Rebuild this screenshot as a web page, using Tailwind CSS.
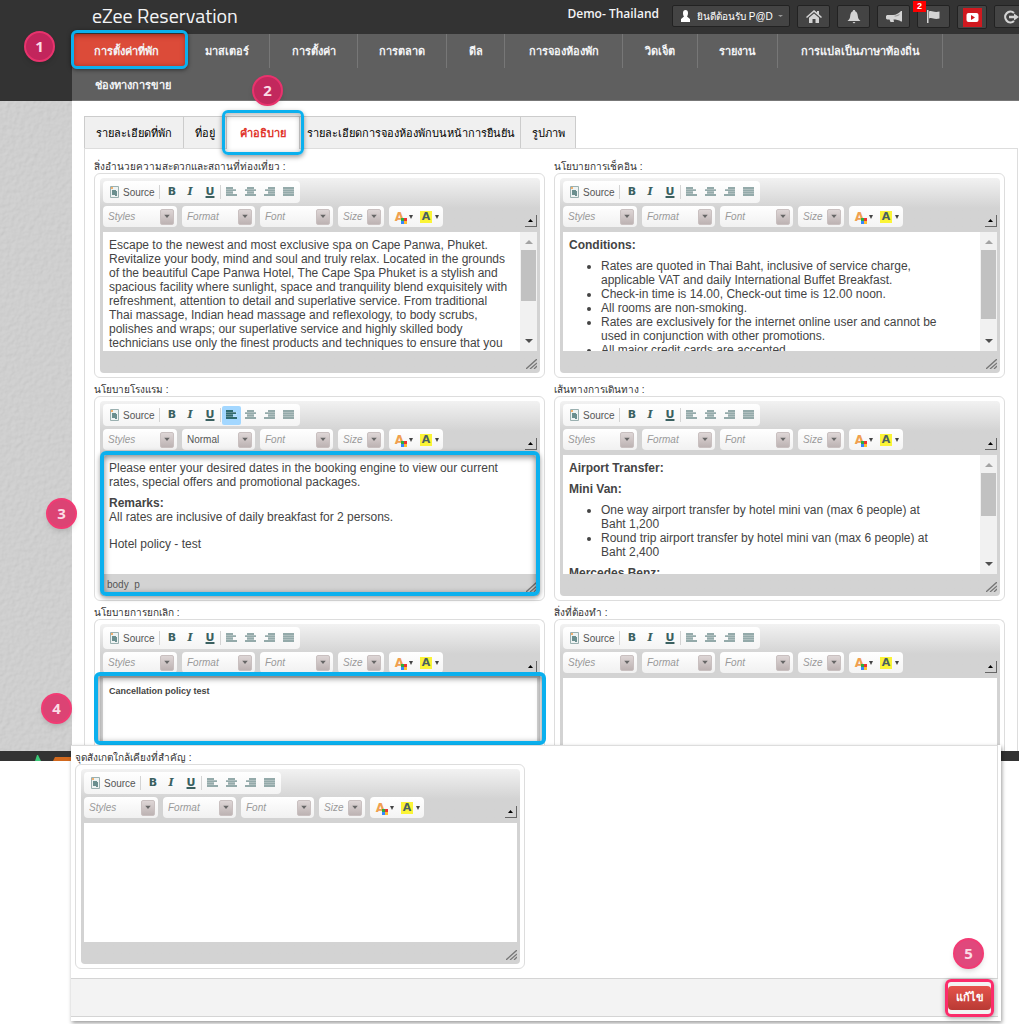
<!DOCTYPE html>
<html lang="th">
<head>
    <meta charset="UTF-8">
    <meta name="viewport" content="width=device-width, initial-scale=1.0">
    <title>eZee Reservation</title>
    <script src="https://cdn.jsdelivr.net/npm/@tailwindcss/browser@4"></script>
    <style>
        body { font-family: 'Liberation Sans', 'Noto Sans', sans-serif; }
    </style>
</head>
<body class="bg-white text-[#333]">
    <div class="relative overflow-hidden pb-1">
        <!-- Header -->
        <header class="flex h-[34px] justify-between overflow-hidden bg-[#333] pl-[92px]">
            <h1 class="font-['Titillium_Web','Roboto'] text-[20px] leading-[32px] text-gray-100">eZee Reservation</h1>
            <div class="-mr-[9px] flex shrink-0 items-start gap-[7px] pt-[5px]">
                <span class="mr-[6px] font-['Open_Sans'] text-[12px] leading-[18px] font-semibold text-gray-100">Demo- Thailand</span>
                <button class="flex h-[22px] w-[118px] items-center rounded-xs border border-[#222] bg-[#444] pl-2 text-[10px] text-white">
                    <svg class="mr-[7px] h-3 w-[9px] shrink-0" viewBox="0 0 9 12" fill="#fff"><path d="M2 3a2.500 3 0 0 1 5 0c0 2-.6 2.800-1 3.500L9 9v3H0V9l3-2.500C2.500 6 2 5 2 3z"/></svg>
                    <span class="whitespace-nowrap">ยินดีต้อนรับ P@D</span>
                    <svg class="ml-auto mr-[6px] h-1 w-[5px] shrink-0" viewBox="0 0 5 4" fill="#999"><path d="M0 1h5L2.500 3z"/></svg>
                </button>
                <button aria-label="Home" class="flex h-[23px] w-[33px] items-center justify-center rounded-xs border border-[#222] bg-[#444]">
                    <svg class="h-[13px] w-4" viewBox="0 0 16 13" fill="#d4d4d4"><path d="M8 0l3 2.600V1h2v3.300L16 7l-1 1-7-6-7 6-1-1z"/><path d="M8 3.500l5 4.300V13H9.500V9h-3v4H3V7.800z"/></svg>
                </button>
                <button aria-label="Notifications" class="flex h-[23px] w-[33px] items-center justify-center rounded-xs border border-[#222] bg-[#444]">
                    <svg class="h-[14px] w-[14px]" viewBox="0 0 14 14" fill="#d4d4d4"><path d="M7 0c.8 0 1.200.6 1.200 1.200C10.200 2 10.500 4 10.800 6c.2 2.500 1.200 3.500 2.700 5H.5c1.500-1.500 2.500-2.500 2.700-5 .3-2 .6-4 2.600-4.800C5.800.6 6.200 0 7 0zM5.500 12h3L7 13.500z"/></svg>
                </button>
                <button aria-label="Announcements" class="flex h-[23px] w-[33px] items-center justify-center rounded-xs border border-[#222] bg-[#444]">
                    <svg class="h-3 w-4" viewBox="0 0 16 12" fill="#d4d4d4"><path d="M15 0h1v10.500h-1C13 9 10 8.500 7.500 8.500L8 11H4.500L3.500 8.500H1L0 7.500V5l1-1h6c3 0 6-2 8-4z"/><path fill="#999" d="M13.500 3v1C12 5 10 5.500 8.500 5.600V4.800c1.500-.3 3.500-1 5-1.800z"/></svg>
                </button>
                <button aria-label="Flags" class="relative flex h-[23px] w-[33px] items-center justify-center rounded-xs border border-[#222] bg-[#444]">
                    <svg class="h-[13px] w-[13px]" viewBox="0 0 13 13" fill="#d4d4d4"><path d="M0 0h1.500v13H0zM2 1.500c3-1.500 4.500 1.500 10.500 0v7c-6 1.500-7-1.500-10.500 0z"/></svg>
                    <span class="absolute -left-[5px] -top-[5px] h-[11px] w-[13px] bg-[#f00] text-[9px] leading-[11px] font-bold text-white">2</span>
                </button>
                <button aria-label="Videos" class="flex h-[24px] w-[30px] items-center justify-center rounded-xs border border-[#222] bg-[#444]">
                    <svg class="h-[19px] w-[19px]" viewBox="0 0 19 19"><path fill="#d0191f" d="M0 0h19v19H0z"/><rect x="3.500" y="5" width="12" height="9" rx="2" fill="#fff"/><path fill="#d0191f" d="M8 7l4 2.500L8 12z"/></svg>
                </button>
                <button aria-label="Sign out" class="flex h-[23px] w-[34px] items-center justify-center rounded-xs border border-[#222] bg-[#444]">
                    <svg class="h-[14px] w-4" viewBox="0 0 16 14"><path fill="none" stroke="#d4d4d4" stroke-width="2.200" d="M11 3a5.300 5.300 0 1 0 0 8"/><path fill="#d4d4d4" d="M6 5.800h5V3.500L16 7l-5 3.500V8.200H6z"/></svg>
                </button>
            </div>
        </header>

        <div class="flex">
            <!-- Wall texture beside the page -->
            <aside class="flex w-[72px] shrink-0 flex-col">
                <div class="h-[67px] bg-[#333]"></div>
                <div class="relative flex-1 overflow-hidden bg-[#c9c9c9]">
                    <svg class="absolute inset-0 h-full w-full" aria-hidden="true">
                        <filter id="wall" x="0" y="0" width="100%" height="100%">
                            <feTurbulence type="fractalNoise" baseFrequency="0.22" numOctaves="2" result="n"/>
                            <feDiffuseLighting in="n" lighting-color="#d6d6d6" surfaceScale="0.4"><feDistantLight azimuth="225" elevation="68"/></feDiffuseLighting>
                        </filter>
                        <rect width="100%" height="100%" filter="url(#wall)"/>
                    </svg>
                </div>
            </aside>

            <main class="min-w-0 flex-1">
                <nav class="flex h-[67px] flex-wrap border-b border-[#777] bg-[#5f5f5f] text-center text-[11px] leading-[34px] font-bold text-gray-100">
                    <a href="#" class="relative h-[34px] w-[115px] bg-[#dc4b39] pr-[6px] shadow-[inset_0_0_6px_#7a1f14]">
                        การตั้งค่าที่พัก
                        <span class="absolute -inset-x-px -top-1 -bottom-[1px] rounded-md border-3 border-[#0bb0ee] shadow-[0_1px_4px_rgba(0,0,0,0.5)]"></span>
                    </a>
                    <a href="#" class="h-[34px] w-[83px] border-r border-[#777] pr-[2px]">มาสเตอร์</a>
                    <a href="#" class="h-[34px] w-[88px] border-r border-[#777]">การตั้งค่า</a>
                    <a href="#" class="h-[34px] w-[89px] border-r border-[#777]">การตลาด</a>
                    <a href="#" class="h-[34px] w-[58px] border-r border-[#777]">ดีล</a>
                    <a href="#" class="h-[34px] w-[118px] border-r border-[#777]">การจองห้องพัก</a>
                    <a href="#" class="h-[34px] w-[75px] border-r border-[#777]">วิดเจ็ต</a>
                    <a href="#" class="h-[34px] w-[80px] border-r border-[#777]">รายงาน</a>
                    <a href="#" class="h-[34px] w-[165px] border-r border-[#777]">การแปลเป็นภาษาท้องถิ่น</a>
                    <a href="#" class="h-[32px] w-[121px]">ช่องทางการขาย</a>
                </nav>

                <div class="pt-[15px] pr-px pl-3">
                    <!-- Tabs -->
                    <div class="flex h-[33px] border-b border-[#ddd] text-center text-[11px] leading-[32px] text-black">
                        <a href="#" class="w-[99px] border-t border-l border-[#ccc] bg-[#f0f0f0]">รายละเอียดที่พัก</a>
                        <a href="#" class="w-[43px] border-t border-l border-[#ccc] bg-[#f0f0f0]">ที่อยู่</a>
                        <a href="#" class="relative z-10 h-[33px] w-[74px] border-x border-t border-[#ccc] bg-white font-bold text-[#e0352b]">
                            คำอธิบาย
                            <span class="absolute -inset-x-[5px] -top-[7px] -bottom-[6px] rounded-md border-3 border-[#0bb0ee] shadow-[0_2px_5px_rgba(0,0,0,0.4),inset_0_2px_6px_rgba(0,0,0,0.3)]"></span>
                        </a>
                        <a href="#" class="w-[220px] border-t border-[#ccc] bg-[#f0f0f0] pl-[2px] whitespace-nowrap">รายละเอียดการจองห้องพักบนหน้าการยืนยัน</a>
                        <a href="#" class="w-[56px] border-x border-t border-[#ccc] bg-[#f0f0f0]">รูปภาพ</a>
                    </div>

                    <div class="grid grid-cols-2 gap-x-[9px] border-x border-[#ddd] pt-[6px] pr-3 pl-[9px]">
                        <section data-editor="facilities" data-label="สิ่งอำนวยความสะดวกและสถานที่ท่องเที่ยว :" data-thumb="h-[51px]">
                            <p class="pr-1">Escape to the newest and most exclusive spa on Cape Panwa, Phuket. Revitalize your body, mind and soul and truly relax. Located in the grounds of the beautiful Cape Panwa Hotel, The Cape Spa Phuket is a stylish and spacious facility where sunlight, space and tranquility blend exquisitely with refreshment, attention to detail and superlative service. From traditional Thai massage, Indian head massage and reflexology, to body scrubs, polishes and wraps; our superlative service and highly skilled body technicians use only the finest products and techniques to ensure that you are pampered to perfection. Wander around in Wildnisss body treatments and</p>
                        </section>
                        <section data-editor="checkin" data-label="นโยบายการเช็คอิน :" data-thumb="h-[69px]">
                            <p class="font-bold">Conditions:</p>
                            <ul class="mt-[7px] list-disc pr-8 pl-8">
                                <li>Rates are quoted in Thai Baht, inclusive of service charge, applicable VAT and daily International Buffet Breakfast.</li>
                                <li>Check-in time is 14.00, Check-out time is 12.00 noon.</li>
                                <li>All rooms are non-smoking.</li>
                                <li>Rates are exclusively for the internet online user and cannot be used in conjunction with other promotions.</li>
                                <li>All major credit cards are accepted.</li>
                            </ul>
                        </section>
                        <section data-editor="hotel" data-label="นโยบายโรงแรม :" data-active data-path="body&nbsp;&nbsp;p">
                            <p class="pr-2">Please enter your desired dates in the booking engine to view our current rates, special offers and promotional packages.</p>
                            <p class="mt-[7px]"><b>Remarks:</b><br>All rates are inclusive of daily breakfast for 2 persons.</p>
                            <p class="mt-[13px]">Hotel policy - test</p>
                            <span class="absolute -inset-x-[3px] -top-1 bottom-0 rounded-md border-4 border-[#0bb0ee] shadow-[0_2px_5px_rgba(0,0,0,0.4),inset_0_2px_6px_rgba(0,0,0,0.5)]"></span>
                        </section>
                        <section data-editor="directions" data-label="เส้นทางการเดินทาง :" data-thumb="h-[43px]">
                            <p class="font-bold">Airport Transfer:</p>
                            <p class="mt-[7px] font-bold">Mini Van:</p>
                            <ul class="mt-[7px] list-disc pr-8 pl-8">
                                <li>One way airport transfer by hotel mini van (max 6 people) at Baht 1,200</li>
                                <li>Round trip airport transfer by hotel mini van (max 6 people) at Baht 2,400</li>
                            </ul>
                            <p class="mt-[7px] font-bold">Mercedes Benz:</p>
                        </section>
                        <section data-editor="cancellation" data-label="นโยบายการยกเลิก :" data-cut>
                            <p class="text-[9px] font-bold">Cancellation policy test</p>
                            <span class="absolute -inset-x-[9px] -top-[6px] bottom-[6px] rounded-md border-4 border-[#0bb0ee] shadow-[inset_0_2px_6px_rgba(0,0,0,0.5)]"></span>
                        </section>
                        <section data-editor="todo" data-label="สิ่งที่ต้องทำ :" data-cut></section>
                    </div>
                </div>
            </main>
        </div>

        <div class="flex h-[10px] items-end bg-[#333] pl-[35px]">
            <svg class="h-[6px] w-9" viewBox="0 0 36 6"><path fill="#3cc878" d="M2 0h1l3 6H0z"/><path fill="#d2691e" d="M20 2h16v4H18z"/></svg>
        </div>

        <!-- Lower part of the form -->
        <div class="relative -mt-4 mr-[18px] ml-[71px] bg-white pr-[3px] pb-1 shadow-[1px_2px_4px_rgba(0,0,0,0.4)]">
            <div class="border-t border-r border-[#ddd] px-1 pb-[9px]">
                <div class="w-[450px]">
                    <section data-editor="landmarks" data-label="จุดสังเกตใกล้เคียงที่สำคัญ :"></section>
                </div>
            </div>
            <div class="flex h-[39px] items-center justify-end border-y border-[#d4d4d4] bg-[#f3f3f3] pr-[7px]">
                <button class="relative h-6 w-[43px] rounded-sm bg-linear-to-b from-[#e5534b] to-[#b93a34] text-[11px] font-bold text-white">
                    แก้ไข
                    <span class="absolute -inset-x-[3px] -inset-y-[7px] rounded-md border-3 border-[#fb2c6b] shadow-[0_1px_5px_rgba(0,0,0,0.4)]"></span>
                </button>
            </div>
        </div>

        <!-- Step markers -->
        <div class="text-center font-['Open_Sans'] text-[15px] leading-[27px] font-bold text-[#fbdce6]">
            <span class="absolute top-[31px] left-6 size-[31px] rounded-full border-2 border-[#e8336d] bg-[#c2255c] shadow-md">1</span>
            <span class="absolute top-[75px] left-[252px] size-[31px] rounded-full border-2 border-[#e8336d] bg-[#c2285d] shadow-md">2</span>
            <span class="absolute top-[498px] left-[46px] size-[31px] rounded-full border-2 border-[#f23b74] bg-[#dc4374] shadow-md">3</span>
            <span class="absolute top-[693px] left-[41px] size-[31px] rounded-full border-2 border-[#f23b74] bg-[#dc4374] shadow-md">4</span>
            <span class="absolute top-[938px] right-[35px] size-[31px] rounded-full border-2 border-[#f23b74] bg-[#e0487c] shadow-md">5</span>
        </div>
    </div>

    <script>
        const ALIGN_ICONS = {
            Left: 'M0 0h7v3H0zM0 2h10v2H0zM0 4h7v3H0zM0 7h11v2H0z',
            Center: 'M2 0h7v2H2zM0 2h11v2H0zM2 4h7v3H2zM0 7h11v2H0z',
            Right: 'M4 0h7v3H4zM1 2h10v2H1zM4 4h7v3H4zM0 7h11v2H0z',
            Justify: 'M0 0h11v9H0z'
        };

        function combo(name, value, width) {
            const tone = value === name ? 'italic text-[#999]' : 'text-[#555]';
            return `
                <div class="flex h-[21px] ${width} items-center rounded-sm bg-linear-to-b from-white to-[#f1f1f1] pr-[3px] pl-[5px]">
                    <select aria-label="${name}" class="min-w-0 flex-1 appearance-none text-[10px] leading-[15px] ${tone}"><option>${value}</option></select>
                    <svg class="h-4 w-[14px] shrink-0 rounded-xs border border-[#c9c0c0] bg-linear-to-b from-[#ded6d6] to-[#bdb3b3]" viewBox="0 0 13 15"><path fill="#666" d="M3.500 5h6l-3 3.500z"/></svg>
                </div>`;
        }

        function alignButton(name, active) {
            const tone = active ? 'bg-[#a3d7ff] text-[#2f6a70]' : 'text-[#94aaaa]';
            return `
                <button aria-label="Align ${name}" class="flex h-[19px] w-[19px] items-center justify-center rounded-xs ${tone}">
                    <svg class="h-[10px] w-[11px]" viewBox="0 0 11 10" fill="currentColor"><path d="${ALIGN_ICONS[name]}"/><path stroke="#fff" stroke-opacity="0.25" d="M0 2.500h11M0 4.500h11M0 6.500h11"/></svg>
                </button>`;
        }

        function toolbar(active) {
            return `
                <div class="flex h-[22px] w-[197px] items-center rounded-sm bg-linear-to-b from-white to-[#f4f4f4]">
                    <button class="flex w-14 items-center gap-1 pl-[7px] text-[10px] text-[#555]">
                        <svg class="h-3 w-[9px]" viewBox="0 0 9 12"><path fill="#eef3f3" stroke="#9ab0b0" d="M.5.5h8v11h-8z"/><path fill="#6b8f8f" d="M2 4h4v1h1v5H5V9H2z"/><path fill="#f0b070" d="M1 1h2v2H1z"/></svg>
                        Source
                    </button>
                    <span class="h-[14px] w-px bg-[#d4d4d4]"></span>
                    <button aria-label="Bold" class="w-5 pl-1 font-['DejaVu_Sans'] text-[11px] leading-[18px] font-bold text-[#3a6060]">B</button>
                    <button aria-label="Italic" class="w-5 font-['DejaVu_Serif'] text-[11px] leading-[18px] font-bold text-[#3a6060] italic">I</button>
                    <button aria-label="Underline" class="w-5 font-['DejaVu_Sans'] text-[11px] leading-[18px] font-bold text-[#3a6060] underline decoration-2 underline-offset-1">U</button>
                    <span class="mr-px h-[14px] w-px bg-[#d4d4d4]"></span>
                    ${alignButton('Left', active)}${alignButton('Center')}${alignButton('Right')}${alignButton('Justify')}
                </div>
                <div class="mt-[3px] flex h-[21px] gap-[5px]">
                    ${combo('Styles', 'Styles', 'w-[74px]')}
                    ${combo('Format', active ? 'Normal' : 'Format', 'w-[73px]')}
                    ${combo('Font', 'Font', 'w-[73px]')}
                    ${combo('Size', 'Size', 'w-[46px]')}
                    <div class="flex items-center rounded-sm bg-linear-to-b from-white to-[#f4f4f4]">
                        <button aria-label="Text color" class="flex w-6 items-center justify-end font-['DejaVu_Sans'] text-[12px] font-bold text-[#f0a050]">
                            <span class="relative">A<svg class="absolute -right-[3px] bottom-[2px] size-[6px]" viewBox="0 0 6 6"><path fill="#e33" d="M3 0h3v3H3z"/><path fill="#2fae3c" d="M0 0h3v3H0z"/><path fill="#38f" d="M0 3h3v3H0z"/><path fill="#fb3" d="M3 3h3v3H3z"/></svg></span>
                            <svg class="ml-[5px] h-1 w-1 shrink-0" viewBox="0 0 4 4" fill="#444"><path d="M0 0h4L2 4z"/></svg>
                        </button>
                        <button aria-label="Background color" class="flex w-[30px] items-center gap-[3px] pl-[7px] font-['DejaVu_Sans'] text-[11px] leading-[12px] font-bold text-[#4a6060]">
                            <span class="w-3 bg-[#fbf436]">A</span>
                            <svg class="h-1 w-1 shrink-0" viewBox="0 0 4 4" fill="#444"><path d="M0 0h4L2 4z"/></svg>
                        </button>
                    </div>
                    <button aria-label="Collapse toolbar" class="mt-[9px] ml-auto flex h-3 w-3 items-center justify-center self-start border-r border-b border-[#666]">
                        <svg class="h-[3px] w-[5px]" viewBox="0 0 5 3"><path d="M2.500 0L5 3H0z"/></svg>
                    </button>
                </div>`;
        }

        function scrollbar(thumb) {
            return `
                <div class="flex w-[17px] shrink-0 flex-col items-center bg-[#f1f1f1]">
                    <svg class="mt-2 mb-[6px] h-1 w-2 shrink-0" viewBox="0 0 8 4" fill="#a3a3a3"><path d="M4 0l4 4H0z"/></svg>
                    <div class="w-[15px] ${thumb} bg-[#c1c1c1]"></div>
                    <svg class="mt-auto mb-2 h-1 w-2 shrink-0" viewBox="0 0 8 4" fill="#505050"><path d="M0 0h8L4 4z"/></svg>
                </div>`;
        }

        document.querySelectorAll('[data-editor]').forEach(section => {
            const { editor, label, thumb, path } = section.dataset;
            const active = 'active' in section.dataset;
            const cut = 'cut' in section.dataset;

            section.innerHTML = `
                <h2 id="${editor}-label" class="h-[18px] text-[10px] leading-[24px] whitespace-nowrap text-[#333]">${label}</h2>
                <div class="border border-[#ddd] pt-1 pr-1 pl-[5px] ${cut ? 'rounded-t-md border-b-0' : 'rounded-md pb-1'}" role="group" aria-labelledby="${editor}-label">
                    <div class="bg-[#d3d3d3] bg-linear-to-b from-[#f2f2f2] to-[#d3d3d3] to-[30px] px-[3px] pt-[3px] ${cut ? 'rounded-t-sm' : 'rounded-sm'}">
                        ${toolbar(active)}
                        <div class="relative mt-[5px] text-[12px] leading-[14px] text-[#444]">
                            <div class="flex overflow-hidden bg-white ${cut ? 'h-[73px]' : 'h-[119px]'}">
                                <div class="flex-1 px-[6px] pt-[6px]">${section.innerHTML}</div>
                                ${thumb ? scrollbar(thumb) : ''}
                            </div>
                            ${cut ? '' : `
                            <div class="flex h-[22px] items-center justify-between pl-1 text-[10px] text-[#555]">
                                <span>${path || ''}</span>
                                <svg class="mt-1 h-[10px] w-[11px]" viewBox="0 0 11 10" fill="none" stroke="#777" stroke-width="1.300"><path d="M0 10L11 0M4 10l7-6M8 10l3-3"/></svg>
                            </div>`}
                        </div>
                    </div>
                </div>`;
        });
    </script>
</body>
</html>
